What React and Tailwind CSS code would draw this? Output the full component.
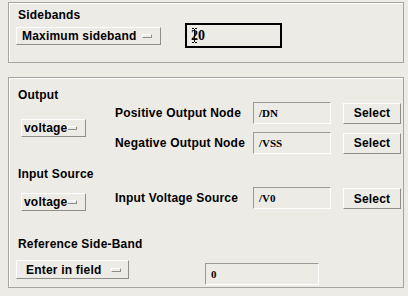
const raised =
  "border border-t-white border-l-white border-b-[#8f8e8a] border-r-[#8f8e8a]";
const sunken =
  "border border-t-[#9c9b97] border-l-[#9c9b97] border-b-white border-r-white";

const Indicator = () => (
  <span className="block w-[10px] h-[4px] border border-t-white border-l-white border-b-[#8f8e8a] border-r-[#8f8e8a]" />
);

const OptionMenu = ({ label, className = "" }) => (
  <div className={`${raised} flex items-center justify-between text-[12px] font-bold tracking-[0.2px] ${className}`}>
    <span className="leading-none">{label}</span>
    <Indicator />
  </div>
);

const Field = ({ value, className = "" }) => (
  <div className={`${sunken} flex items-center pl-[5px] ${className}`}>
    <span className="text-[11px] font-bold leading-none" style={{ fontFamily: '"Liberation Serif", serif' }}>
      {value}
    </span>
  </div>
);

const SelectButton = () => (
  <div className={`${raised} w-[58px] h-[21px] flex items-center justify-center text-[12px] font-bold tracking-[0.2px]`}>
    Select
  </div>
);

const Label = ({ children, className = "" }) => (
  <div className={`text-[12px] font-bold leading-[13px] tracking-[0.2px] ${className}`}>{children}</div>
);

export default function App() {
  return (
    <div
      className="w-[408px] h-[296px] bg-[#edebe6] text-black overflow-hidden pt-[2px]"
      style={{ fontFamily: '"Liberation Sans", Arial, sans-serif' }}
    >
      {/* Sidebands */}
      <div className="ml-[8px] w-[396px] h-[61px] border border-[#a5a4a0] shadow-[inset_1px_1px_0_#fff] flex pl-[9px]">
        <div className="flex flex-col">
          <Label className="mt-[6px]">Sidebands</Label>
          <OptionMenu label="Maximum sideband" className="mt-[5px] -ml-[2px] w-[145px] h-[18px] pl-[5px] pr-[8px]" />
        </div>
        <div className="relative mt-[20px] ml-[24px] w-[97px] h-[25px] border-[2px] border-black flex items-center pl-[4px]">
          <span className="text-[14px] font-bold leading-none" style={{ fontFamily: '"Liberation Serif", serif' }}>
            20
          </span>
          <svg className="absolute left-[5px] top-[3px]" width="5" height="15" viewBox="0 0 5 15">
            <path d="M0 0.5h2M3 0.5h2M2.5 1v13M0 14.5h2M3 14.5h2" stroke="black" strokeWidth="1" fill="none" />
          </svg>
        </div>
      </div>

      {/* Output / Input / Reference */}
      <div className="mt-[14px] ml-[8px] w-[396px] h-[211px] border border-[#a5a4a0] shadow-[inset_1px_1px_0_#fff] flex flex-col pl-[9px]">
        <Label className="mt-[11px]">Output</Label>
        <div className="flex items-center">
          <div className="w-[97px]">
            <OptionMenu label="voltage" className="ml-[3px] w-[65px] h-[18px] pl-[2px] pr-[8px]" />
          </div>
          <div className="flex flex-col gap-[8px]">
            {[
              ["Positive Output Node", "/DN"],
              ["Negative Output Node", "/VSS"],
            ].map(([name, val]) => (
              <div key={name} className="flex items-center h-[22px]">
                <span className="w-[138px] text-[12px] font-bold tracking-[0.2px]">{name}</span>
                <Field value={val} className="w-[78px] h-[22px]" />
                <div className="ml-[12px]">
                  <SelectButton />
                </div>
              </div>
            ))}
          </div>
        </div>

        <Label className="mt-[14px]">Input Source</Label>
        <div className="flex items-start mt-[6px]">
          <div className="w-[97px] pt-[6px]">
            <OptionMenu label="voltage" className="ml-[3px] w-[65px] h-[18px] pl-[2px] pr-[8px]" />
          </div>
          <div className="flex items-center h-[22px]">
            <span className="w-[138px] text-[12px] font-bold tracking-[0.2px]">Input Voltage Source</span>
            <Field value="/V0" className="w-[78px] h-[22px]" />
            <div className="ml-[12px] mt-[1px]">
              <SelectButton />
            </div>
          </div>
        </div>

        <Label className="mt-[27px]">Reference Side-Band</Label>
        <div className="flex items-start mt-[9px]">
          <OptionMenu label="Enter in field" className="-ml-[2px] w-[113px] h-[19px] pl-[9px] pr-[7px]" />
          <Field value="0" className="ml-[76px] mt-[3px] w-[114px] h-[22px]" />
        </div>
      </div>
    </div>
  );
}
